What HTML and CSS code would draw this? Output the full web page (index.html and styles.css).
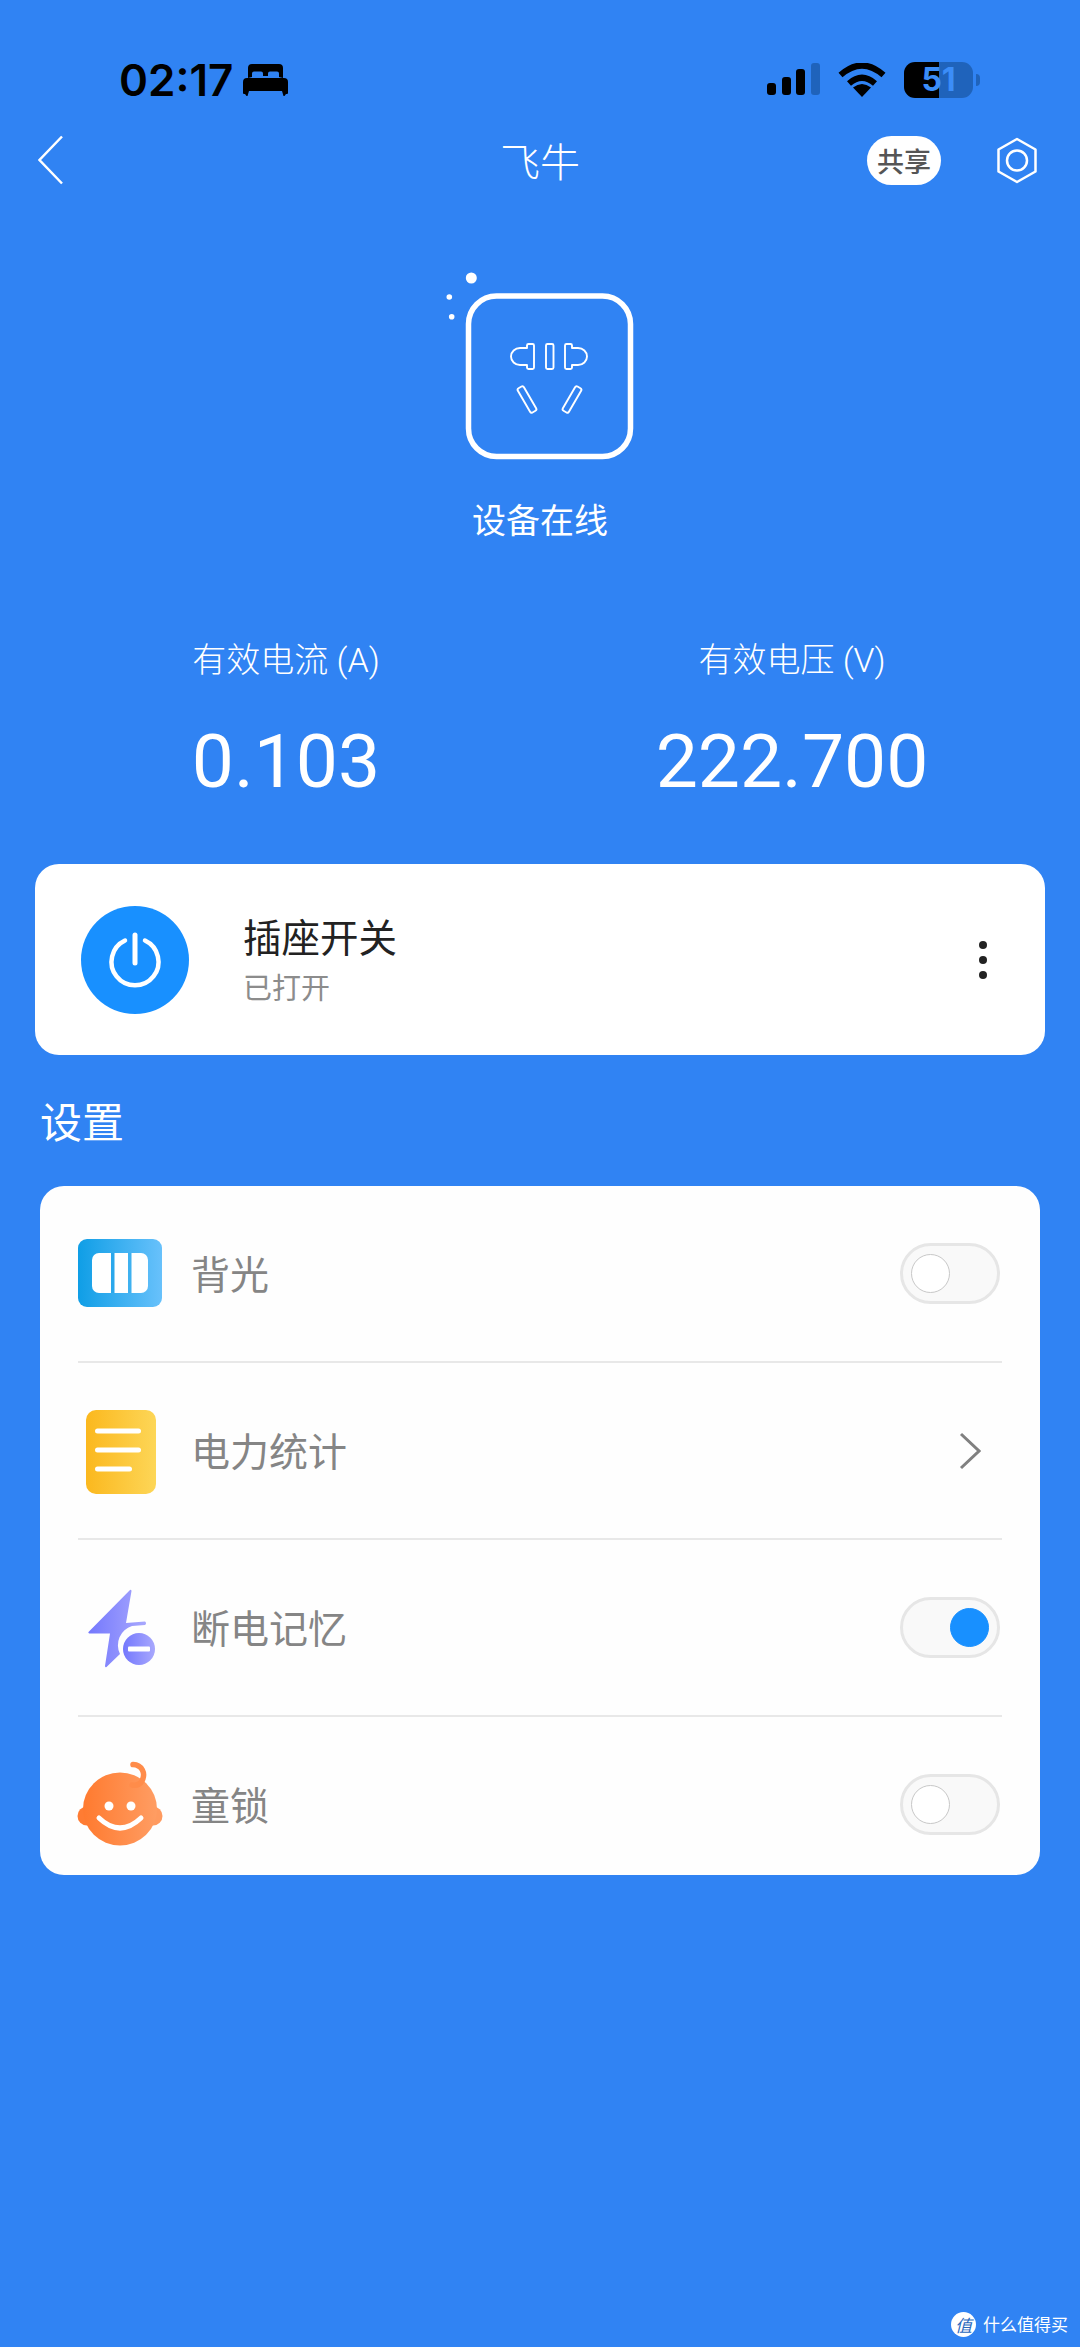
FILE: index.html
```html
<!DOCTYPE html>
<html lang="zh">
<head>
<meta charset="utf-8">
<title>飞牛</title>
<link rel="stylesheet" href="styles.css">
</head>
<body>
<div class="page">
  <div class="status">
    <span class="time">02:17</span>
    <svg class="bed" width="45" height="32" viewBox="0 0 45 32"><path d="M5 14V4a4 4 0 0 1 4-4h27a4 4 0 0 1 4 4v10l-4-1V9.500a2 2 0 0 0-2-2h-7a2 2 0 0 0-2 2V12h-5V9.500a2 2 0 0 0-2-2h-7a2 2 0 0 0-2 2V13zM4 14h37a4 4 0 0 1 4 4v11a1 1 0 0 1-1 1h-1l-1.500 2h-1L39 27H6l-1.500 5h-1L2 30H1a1 1 0 0 1-1-1V18a4 4 0 0 1 4-4z" fill="#000"/></svg>
    <div class="status-right">
      <svg class="signal" width="54" height="34" viewBox="0 0 54 34"><rect x="1" y="20" width="9" height="12" rx="3"/><rect x="16" y="14" width="9" height="18" rx="3"/><rect x="30" y="6" width="9" height="26" rx="3"/><rect class="faded" x="45" y="0" width="9" height="32" rx="3"/></svg>
      <svg class="wifi" width="48" height="34" viewBox="0 0 48 34"><path d="M2.500 12Q24-7 45.500 12M11 20.500Q24 9 37 20.500" fill="none" stroke="#000" stroke-width="6"/><path d="M24 34l-9-9.500Q24 17.500 33 24.500z"/></svg>
      <div class="battery"><span class="battery-num">51</span></div>
      <div class="battery-nub"></div>
    </div>
  </div>

  <div class="nav">
    <svg class="back" width="26" height="50" viewBox="0 0 26 50"><path d="M24 1.500L1.500 25 24 48.500" fill="none" stroke="#fff" stroke-width="2.500"/></svg>
    <h1 class="nav-title">飞牛</h1>
    <div class="share">共享</div>
    <svg class="hex" width="42" height="47" viewBox="0 0 42 47"><path d="M21 2L39.500 12.500V34.500L21 45 2.500 34.500V12.500z" fill="none" stroke="#fff" stroke-width="2.500" stroke-linejoin="round"/><circle cx="21" cy="23.500" r="10" fill="none" stroke="#fff" stroke-width="2.500"/></svg>
  </div>

  <div class="hero">
    <svg class="device" width="240" height="240" viewBox="0 0 240 240">
      <rect x="48.500" y="46" width="162" height="160.500" rx="28" fill="none" stroke="#fff" stroke-width="5.500"/>
      <circle cx="51.300" cy="28" r="5.500" fill="#fff"/>
      <circle cx="29.300" cy="47" r="2.800" fill="#fff"/>
      <circle cx="31.700" cy="66.700" r="2.800" fill="#fff"/>
      <g fill="none" stroke="#fff" stroke-width="1.900" stroke-linejoin="round">
        <path d="M107 98V95.500a1.500 1.500 0 0 1 1.500-1.500h4a1.500 1.500 0 0 1 1.500 1.500v22a1.500 1.500 0 0 1-1.500 1.500h-4a1.500 1.500 0 0 1-1.500-1.500V115H100a9 8.500 0 0 1 0-17z"/>
        <path d="M152 98V95.500a1.500 1.500 0 0 0-1.500-1.500h-4a1.500 1.500 0 0 0-1.500 1.500v22a1.500 1.500 0 0 0 1.500 1.500h4a1.500 1.500 0 0 0 1.500-1.500V115H158a9 8.500 0 0 0 0-17z"/>
        <rect x="126" y="94" width="7.500" height="25" rx="1.500"/>
        <rect x="103.500" y="135.500" width="7" height="28" rx="1.800" transform="rotate(-30 107 149.500)"/>
        <rect x="148.500" y="135.500" width="7" height="28" rx="1.800" transform="rotate(30 152 149.500)"/>
      </g>
    </svg>
    <div class="hero-label">设备在线</div>
  </div>

  <div class="stats">
    <div class="stat"><div class="stat-label">有效电流 (A)</div><div class="stat-value">0.103</div></div>
    <div class="stat"><div class="stat-label">有效电压 (V)</div><div class="stat-value">222.700</div></div>
  </div>

  <div class="power-card">
    <svg class="power-icon" width="108" height="108" viewBox="0 0 108 108"><circle cx="54" cy="54" r="54" fill="#1890ff"/><path d="M44 34.500A23.500 23.500 0 1 0 64 34.500" fill="none" stroke="#fff" stroke-width="4.500" stroke-linecap="round"/><path d="M54 29V57" stroke="#fff" stroke-width="5" stroke-linecap="round"/></svg>
    <div class="power-text"><div class="power-title">插座开关</div><div class="power-sub">已打开</div></div>
    <div class="more"><i></i><i></i><i></i></div>
  </div>

  <h2 class="section">设置</h2>

  <div class="settings">
    <div class="row">
      <svg class="row-icon" width="100" height="100" viewBox="0 0 100 100"><defs><linearGradient id="g1"><stop offset="0" stop-color="#0f9ee6"/><stop offset="1" stop-color="#68c1fb"/></linearGradient></defs><rect x="8" y="15" width="84" height="68" rx="9" fill="url(#g1)"/><rect x="22" y="29" width="56" height="40" rx="7" fill="#fff"/><rect x="41" y="29" width="3.500" height="40" fill="#2aa8ec"/><rect x="58" y="29" width="3.500" height="40" fill="#3fb1f0"/></svg>
      <span class="row-label">背光</span>
      <div class="toggle"><span class="knob"></span></div>
    </div>
    <div class="row">
      <svg class="row-icon" width="100" height="100" viewBox="0 0 100 100"><defs><linearGradient id="g2"><stop offset="0" stop-color="#fbb81e"/><stop offset="1" stop-color="#fdd657"/></linearGradient></defs><rect x="16" y="9" width="70" height="84" rx="10" fill="url(#g2)"/><g fill="#fff"><rect x="25" y="27.500" width="46" height="5" rx="2.500"/><rect x="25" y="46.500" width="46" height="5" rx="2.500"/><rect x="25" y="65.500" width="37" height="5" rx="2.500"/></g></svg>
      <span class="row-label">电力统计</span>
      <svg class="chevron" width="22" height="38" viewBox="0 0 22 38"><path d="M2 2L20 19 2 36" fill="none" stroke="#808080" stroke-width="3"/></svg>
    </div>
    <div class="row">
      <svg class="row-icon" width="100" height="100" viewBox="0 0 100 100"><defs><linearGradient id="g3"><stop offset="0" stop-color="#7478fd"/><stop offset="1" stop-color="#a8a8fd"/></linearGradient></defs><path d="M60 12L18.500 54a1 1 0 0 0 1 1.500H40L35 88a1 1 0 0 0 1.500 1L50 76a20 20 0 0 1 12-28l13-1a2 2 0 0 0 0-3.500L56 45l5.500-32a1 1 0 0 0-1.500-1z" fill="url(#g3)"/><circle cx="69" cy="71" r="16" fill="url(#g3)"/><rect x="58" y="68.500" width="22" height="5" rx="1" fill="#fff"/></svg>
      <span class="row-label">断电记忆</span>
      <div class="toggle"><span class="knob on"></span></div>
    </div>
    <div class="row row-last">
      <svg class="row-icon" width="100" height="100" viewBox="0 0 100 100"><defs><linearGradient id="g4"><stop offset="0" stop-color="#ff7a2f"/><stop offset="1" stop-color="#ff9d63"/></linearGradient></defs><circle cx="17" cy="61" r="9.500" fill="#ff7c33"/><circle cx="83" cy="61" r="9.500" fill="#ff9a5f"/><ellipse cx="50" cy="54" rx="37" ry="36.500" fill="url(#g4)"/><path d="M63 9.500C72 10 76 18 72 26Q69 31 62 30" fill="none" stroke="#ff8c4a" stroke-width="5.500" stroke-linecap="round"/><circle cx="39" cy="51" r="4.500" fill="#fff"/><circle cx="61" cy="51" r="4.500" fill="#fff"/><path d="M29 63Q50 83 71 63" fill="none" stroke="#fff" stroke-width="5" stroke-linecap="round"/></svg>
      <span class="row-label">童锁</span>
      <div class="toggle"><span class="knob"></span></div>
    </div>
  </div>

  <div class="watermark"><span class="wm-logo">值</span><span class="wm-text">什么值得买</span></div>
</div>
</body>
</html>
```

FILE: styles.css
```css
* { box-sizing: border-box; }
html, body { margin: 0; padding: 0; }
body { font-family: "Noto Sans CJK SC", "Inter", sans-serif; }
.page {
  width: 1080px;
  height: 2347px;
  background: #3083f3;
  display: flex;
  flex-direction: column;
  overflow: hidden;
}
.status {
  display: flex;
  align-items: center;
  height: 40px;
  margin-top: 60px;
  padding-left: 119px;
}
.time {
  font-family: "Inter", sans-serif;
  font-size: 44px;
  font-weight: 600;
  color: #000;
  line-height: 40px;
}
.bed { margin-left: 10px; }
.status-right {
  margin-left: auto;
  display: flex;
  align-items: center;
  padding-right: 100px;
}
.signal { margin-right: 18px; fill: #000; }
.signal .faded { fill: #1f63bb; }
.wifi { margin-right: 18px; fill: #000; }
.battery {
  width: 69px;
  height: 36px;
  border-radius: 11px;
  background: linear-gradient(90deg, #000 0 35px, #1f63bb 35px 100%);
  display: flex;
  align-items: center;
  justify-content: center;
}
.battery-num {
  font-family: "Inter", sans-serif;
  font-size: 32px;
  font-weight: 700;
  line-height: 36px;
  color: #3b8df8;
}
.battery-nub {
  width: 4px;
  height: 12px;
  margin-left: 3px;
  border-radius: 0 4px 4px 0;
  background: #1f63bb;
}
.nav {
  display: flex;
  align-items: center;
  height: 50px;
  margin-top: 35px;
  padding-left: 38px;
  position: relative;
}
.nav-title {
  position: absolute;
  left: 0;
  right: 0;
  margin: 0;
  text-align: center;
  font-size: 40px;
  font-weight: 300;
  line-height: 50px;
  color: #fff;
}
.share {
  margin-left: auto;
  width: 74px;
  height: 49px;
  border-radius: 25px;
  background: #fff;
  color: #555;
  font-size: 27px;
  font-weight: 500;
  line-height: 49px;
  text-align: center;
  white-space: nowrap;
  position: relative;
}
.hex { margin-left: 55px; margin-right: 42px; position: relative; }
.hero {
  display: flex;
  flex-direction: column;
  align-items: center;
  margin-top: 65px;
}
.device { display: block; }
.hero-label {
  font-size: 34px;
  line-height: 50px;
  color: #fff;
  margin-top: 4px;
}
.stats {
  display: grid;
  grid-template-columns: 572px 440px;
  margin-top: 91px;
}
.stat { text-align: center; color: #fff; }
.stat-label {
  font-family: "Roboto", "Noto Sans CJK SC", sans-serif;
  font-size: 34px;
  font-weight: 300;
  line-height: 50px;
}
.stat-value {
  font-family: "Roboto", sans-serif;
  font-size: 75px;
  font-weight: 400;
  line-height: 90px;
  margin-top: 31px;
}
.power-card {
  margin: 58px 35px 0;
  height: 191px;
  border-radius: 24px;
  background: #fff;
  display: flex;
  align-items: center;
  padding: 0 36px 0 46px;
}
.power-icon { display: block; }
.power-text { margin-left: 54px; }
.power-title { font-size: 38.500px; line-height: 50px; color: #222; margin-top: -4px; }
.power-sub { font-size: 29px; line-height: 40px; color: #8c8c8c; margin-top: 6px; }
.more {
  margin-left: auto;
  margin-right: 22px;
  display: flex;
  flex-direction: column;
  gap: 7px;
}
.more i { width: 8px; height: 8px; border-radius: 50%; background: #222; display: block; }
.section {
  margin: 35px 0 0 40px;
  font-size: 42px;
  font-weight: 400;
  line-height: 60px;
  color: #fff;
}
.settings {
  margin: 36px 40px 0;
  height: 689px;
  border-radius: 24px;
  background: #fefefe;
  padding: 0 38px;
}
.row {
  display: flex;
  align-items: center;
  height: 177px;
  border-bottom: 2px solid #e8e8e8;
  position: relative;
}
.row-last {
  height: 158px;
  padding-top: 17px;
  border-bottom: 0;
}
.row-icon { display: block; margin-left: -8px; flex: none; }
.row-label { margin: 0 0 4px 21px; font-size: 39px; line-height: 50px; color: #858585; }
.toggle {
  margin-left: auto;
  margin-right: 2px;
  width: 100px;
  height: 61px;
  border-radius: 31px;
  background: #f9f9f9;
  border: 3px solid #e6e6e6;
  display: flex;
  align-items: center;
  padding: 0 8px;
}
.knob {
  width: 39px;
  height: 39px;
  border-radius: 50%;
  background: #fff;
  border: 1px solid #c8c8c8;
}
.knob.on {
  margin-left: auto;
  background: #1890ff;
  border-color: #1890ff;
}
.chevron { margin-left: auto; margin-right: 21px; }
.watermark {
  margin-top: auto;
  margin-bottom: 10px;
  margin-right: 12px;
  display: flex;
  align-items: center;
  justify-content: flex-end;
  color: #fff;
}
.wm-logo {
  width: 25px;
  height: 25px;
  border-radius: 50%;
  background: #fff;
  color: #2a68bd;
  font-size: 17px;
  font-style: italic;
  line-height: 25px;
  text-align: center;
}
.wm-text { margin-left: 7px; font-size: 17px; line-height: 26px; }
```
